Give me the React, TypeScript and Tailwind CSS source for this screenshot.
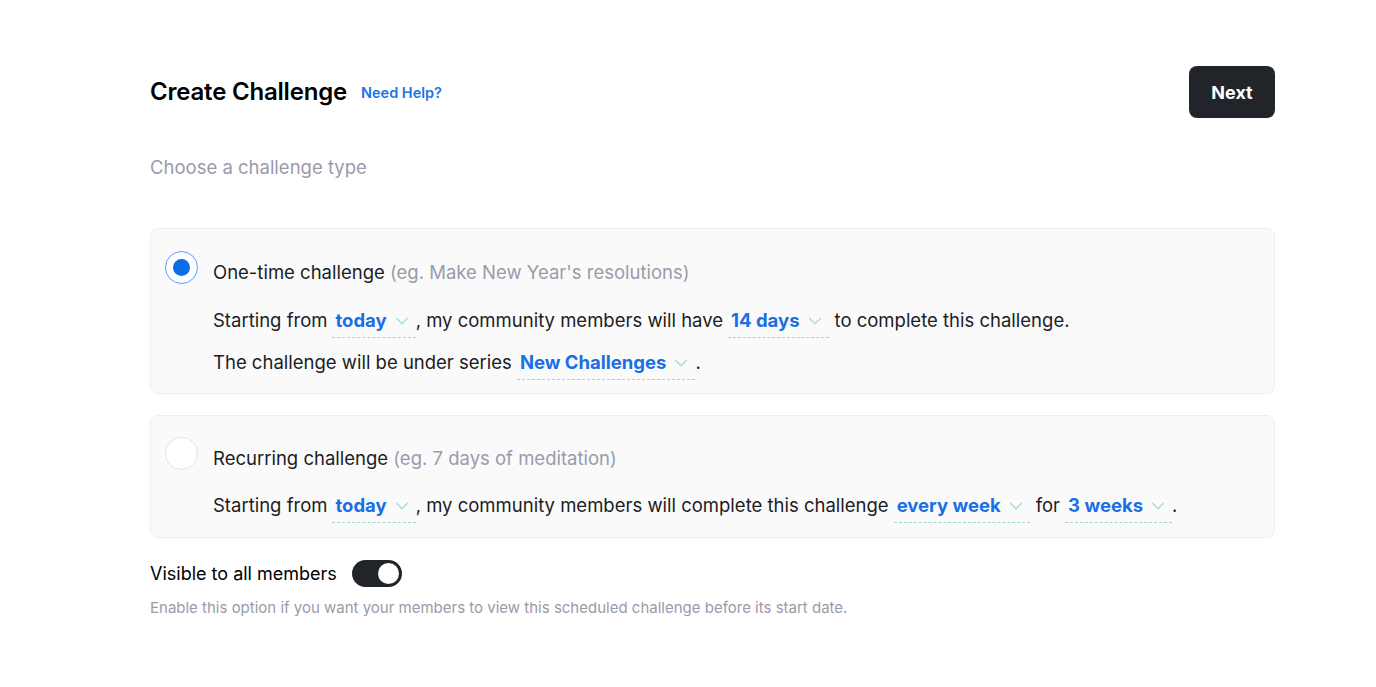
import { ChevronDown } from "lucide-react";

function Picker({ label }: { label: string }) {
  return (
    <span className="ml-[5px] inline-flex items-baseline border-b border-dashed border-[#9fd6d9] pr-[6px] pl-[3px] pb-[4px] leading-[26px]">
      <span className="font-bold text-[#1a6fe6]">{label}</span>
      <ChevronDown className="ml-[4px] -mr-[3px] h-[22px] w-[22px] translate-y-[5px] text-[#a8dcdc]" strokeWidth={1.5} />
    </span>
  );
}

function Radio({ checked }: { checked: boolean }) {
  return (
    <span
      className={
        "mt-[-8px] flex h-[33px] w-[33px] shrink-0 items-center justify-center rounded-full bg-white " +
        (checked ? "border border-[#5b9df0]" : "border border-[#e2e2e8]")
      }
    >
      {checked && <span className="h-[17px] w-[17px] rounded-full bg-[#0a6ce8]" />}
    </span>
  );
}

export default function App() {
  return (
    <div className="min-h-screen bg-white font-['Inter',sans-serif] text-[#1c1c24]">
      <div className="ml-[150px] w-[1125px] pt-[66px]">
        <div className="flex items-center justify-between">
          <div className="flex items-center gap-[14px]">
            <h1 className="text-[24px] font-semibold tracking-[-0.2px] text-black">Create Challenge</h1>
            <a className="mt-[2px] text-[14.5px] font-semibold text-[#1a73e8]">Need Help?</a>
          </div>
          <button className="h-[52px] w-[86px] rounded-[8px] bg-[#212428] text-[18px] font-bold text-white">
            Next
          </button>
        </div>

        <p className="mt-[36px] text-[18.5px] text-[#9a9aab]">Choose a challenge type</p>

        <div className="mt-[46px] flex flex-col gap-[21px]">
          <div className="flex gap-[15px] rounded-[8px] border border-[#eeeef0] bg-[#fafafa] px-[14px] pt-[30px] pb-[13px]">
            <Radio checked />
            <div className="flex flex-col text-[18.5px]">
              <div className="leading-[26px]">
                One-time challenge <span className="text-[#9a9aab]">(eg. Make New Year's resolutions)</span>
              </div>
              <div className="mt-[20px] flex items-baseline leading-[26px]">
                <span>Starting from</span>
                <Picker label="today" />
                <span>, my community members will have</span>
                <Picker label="14 days" />
                <span className="ml-[6px]">to complete this challenge.</span>
              </div>
              <div className="mt-[9px] flex items-baseline leading-[26px]">
                <span>The challenge will be under series</span>
                <Picker label="New Challenges" />
                <span>.</span>
              </div>
            </div>
          </div>

          <div className="flex gap-[15px] rounded-[8px] border border-[#eeeef0] bg-[#fafafa] px-[14px] pt-[29px] pb-[14px]">
            <Radio checked={false} />
            <div className="flex flex-col text-[18.5px]">
              <div className="leading-[26px]">
                Recurring challenge <span className="text-[#9a9aab]">(eg. 7 days of meditation)</span>
              </div>
              <div className="mt-[19px] flex items-baseline leading-[26px]">
                <span>Starting from</span>
                <Picker label="today" />
                <span>, my community members will complete this challenge</span>
                <Picker label="every week" />
                <span className="ml-[6px]">for</span>
                <Picker label="3 weeks" />
                <span>.</span>
              </div>
            </div>
          </div>
        </div>

        <div className="mt-[22px] flex items-center gap-[15px]">
          <span className="text-[18px] text-black">Visible to all members</span>
          <span className="flex h-[27px] w-[50px] items-center justify-end rounded-full bg-[#212428] px-[3px]">
            <span className="h-[21px] w-[21px] rounded-full bg-white" />
          </span>
        </div>
        <p className="mt-[10px] text-[15px] text-[#9a9aab]">
          Enable this option if you want your members to view this scheduled challenge before its start date.
        </p>
      </div>
    </div>
  );
}
